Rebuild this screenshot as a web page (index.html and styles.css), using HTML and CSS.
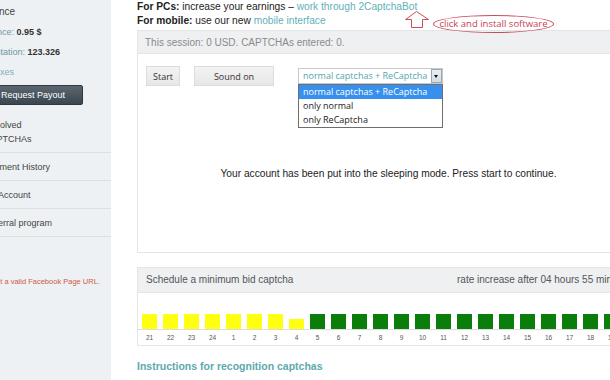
FILE: index.html
```html
<!DOCTYPE html>
<html>
<head>
<meta charset="utf-8">
<link rel="stylesheet" href="styles.css">
</head>
<body>
<div class="page">
  <aside class="sidebar">
    <div class="sb-title">Balance</div>
    <div class="sb-row"><span class="sb-label">Balance:</span> <b>0.95 $</b></div>
    <div class="sb-row"><span class="sb-label">Reputation:</span> <b>123.326</b></div>
    <div class="sb-row"><a class="sb-link" href="#">Annexes</a></div>
    <button class="payout">Request Payout</button>
    <nav class="sb-nav">
      <a class="nav-item" href="#">Unsolved<br>CAPTCHAs</a>
      <a class="nav-item" href="#">Payment History</a>
      <a class="nav-item" href="#">My Account</a>
      <a class="nav-item" href="#">Referral program</a>
    </nav>
    <p class="sb-error">Is not a valid Facebook Page URL.</p>
  </aside>

  <main class="main">
    <div class="head">
      <p><b>For PCs:</b> increase your earnings – <a href="#">work through 2CaptchaBot</a></p>
      <p><b>For mobile:</b> use our new <a href="#">mobile interface</a></p>
      <svg class="note-arrow" width="26" height="19" viewBox="0 0 26 19">
        <path d="M7.5 17.5 V9.5 H1.5 L12.5 1.5 L24.5 9.5 H18.5 V17.5 Z" fill="none" stroke="#cc4a5c" stroke-width="1"/>
      </svg>
      <span class="note-oval">click and install software</span>
    </div>

    <section class="panel session">
      <div class="panel-head">This session: 0 USD. CAPTCHAs entered: 0.</div>
      <div class="session-body">
        <div class="controls">
          <button class="btn btn-start">Start</button>
          <button class="btn btn-sound">Sound on</button>
          <div class="select">
            <div class="select-box"><span class="select-value">normal captchas + ReCaptcha</span><span class="select-arrow"></span></div>
            <ul class="select-list">
              <li class="active">normal captchas + ReCaptcha</li>
              <li>only normal</li>
              <li>only ReCaptcha</li>
            </ul>
          </div>
        </div>
        <p class="sleep-msg">Your account has been put into the sleeping mode. Press start to continue.</p>
      </div>
    </section>

    <section class="panel schedule">
      <div class="sched-head"><span>Schedule a minimum bid captcha</span><span>rate increase after 04 hours 55 minutes</span></div>
      <div class="chart">
        <div class="bars">
          <span class="bar bar-y"></span><span class="bar bar-y"></span><span class="bar bar-y"></span><span class="bar bar-y"></span>
          <span class="bar bar-y"></span><span class="bar bar-y"></span><span class="bar bar-y"></span><span class="bar bar-y bar-low"></span>
          <span class="bar bar-g"></span><span class="bar bar-g"></span><span class="bar bar-g"></span><span class="bar bar-g"></span>
          <span class="bar bar-g"></span><span class="bar bar-g"></span><span class="bar bar-g"></span><span class="bar bar-g"></span>
          <span class="bar bar-g"></span><span class="bar bar-g"></span><span class="bar bar-g"></span><span class="bar bar-g"></span>
          <span class="bar bar-g"></span><span class="bar bar-g"></span><span class="bar bar-g"></span><span class="bar bar-g"></span>
        </div>
        <div class="labels">
          <span>21</span><span>22</span><span>23</span><span>24</span><span>1</span><span>2</span><span>3</span><span>4</span>
          <span>5</span><span>6</span><span>7</span><span>8</span><span>9</span><span>10</span><span>11</span><span>12</span>
          <span>13</span><span>14</span><span>15</span><span>16</span><span>17</span><span>18</span><span>19</span><span>20</span>
        </div>
      </div>
    </section>

    <a class="instructions" href="#">Instructions for recognition captchas</a>
  </main>
</div>
</body>
</html>
```

FILE: styles.css
```css
* { box-sizing: border-box; }
html, body { margin: 0; padding: 0; }
body {
  width: 610px;
  height: 380px;
  overflow: hidden;
  background: #fff;
  font-family: "Liberation Sans", Arial, sans-serif;
  color: #333;
}
a { text-decoration: none; }

.page {
  display: flex;
  align-items: stretch;
  min-height: 380px;
  margin-left: -40px;
}

/* ---------- sidebar ---------- */
.sidebar {
  flex: none;
  width: 151px;
  background: #eef1f3;
  padding: 2px 0 0 19px;
  font-size: 9px;
  color: #444;
}
.sb-title { line-height: 20px; font-size: 10px; color: #444; }
.sb-row { line-height: 20px; }
.sb-label { color: #6f97a4; }
.sb-row b { color: #333; }
.sb-link { color: #78b4bf; }
.payout {
  display: block;
  margin: 3px 0 0;
  width: 104px;
  height: 20px;
  padding: 0 0 0 21px;
  text-align: left;
  background: linear-gradient(#5a6770, #3a4650);
  border: 1px solid #2e3840;
  border-radius: 2px;
  color: #fff;
  font: 9px "Liberation Sans", Arial, sans-serif;
}
.sb-nav { margin-top: 6px; display: flex; flex-direction: column; }
.nav-item {
  display: block;
  padding: 7px 0 6px 5px;
  line-height: 14px;
  border-bottom: 1px solid #dce0e3;
  color: #444;
}
.sb-error {
  margin: 39px 0 0;
  padding-left: 5px;
  line-height: 12px;
  font-size: 7.5px;
  color: #d05848;
}

/* ---------- main ---------- */
.main {
  flex: none;
  width: 503px;
  margin-left: 26px;
}
.head {
  position: relative;
  height: 30px;
  font-size: 10.2px;
  color: #222;
}
.head p { margin: 0; line-height: 14px; }
.head a { color: #5fb1b9; }
.note-arrow {
  position: absolute;
  left: 267px;
  top: 10px;
}
.note-oval {
  position: absolute;
  left: 296px;
  top: 15px;
  width: 121px;
  height: 18px;
  border: 1px solid #cc4a5c;
  border-radius: 50%;
  font: 9.5px/16px "Open Sans", sans-serif;
  color: #c8404f;
  text-align: center;
}

.panel {
  border: 1px solid #e3e6e8;
  width: 503px;
}
.panel-head {
  height: 23px;
  line-height: 23px;
  padding-left: 7px;
  background: #eef0f2;
  border-bottom: 1px solid #e3e6e8;
  font-size: 10px;
  color: #8b8b8b;
}
.session-body { height: 198px; }
.controls {
  display: flex;
  align-items: flex-start;
  padding: 12px 0 0 8px;
}
.btn {
  height: 20px;
  padding: 0;
  background: linear-gradient(#f3f3f3, #e7e7e7);
  border: 1px solid #dcdcdc;
  font: 9px "Open Sans", sans-serif;
  color: #333;
}
.btn-start { width: 34px; }
.btn-sound { width: 80px; margin-left: 14px; }
.select {
  position: relative;
  margin: 2px 0 0 24px;
  width: 145px;
}
.select-box {
  display: flex;
  height: 16px;
  border: 1px solid #c9c9c9;
  padding-left: 4px;
  font: 9px/14px "Open Sans", sans-serif;
  color: #55a6ae;
  background: #fff;
}
.select-arrow {
  position: relative;
  margin-left: auto;
  width: 11px;
  height: 14px;
  background: linear-gradient(#e9eef3, #d3dce5);
  border: 1px solid #9aa6b1;
}
.select-arrow::after {
  content: "";
  position: absolute;
  left: 2px;
  top: 5px;
  border-left: 2.5px solid transparent;
  border-right: 2.5px solid transparent;
  border-top: 3px solid #111;
}
.select-list {
  position: absolute;
  top: 16px;
  left: 0;
  width: 145px;
  margin: 0;
  padding: 0;
  list-style: none;
  background: #fff;
  border: 1px solid #6e6e6e;
  font: 9px/14px "Open Sans", sans-serif;
  color: #222;
}
.select-list li { height: 14px; padding-left: 4px; }
.select-list li.active { background: #3790ee; color: #fff; }
.sleep-msg {
  margin: 81px 0 0;
  line-height: 14px;
  text-align: center;
  font-size: 10.2px;
  color: #222;
}

.schedule { margin-top: 14px; }
.sched-head {
  display: flex;
  justify-content: space-between;
  height: 25px;
  line-height: 24px;
  padding: 0 8px;
  background: #eef0f2;
  border-bottom: 1px solid #e3e6e8;
  font-size: 10px;
  color: #555;
}
.chart { padding-top: 21px; }
.bars {
  display: flex;
  align-items: flex-end;
  gap: 6px;
  height: 16px;
  padding-left: 4px;
  border-bottom: 1px solid #dcdcdc;
}
.bar { flex: none; width: 15px; height: 15px; }
.bar-y { background: #ffff12; }
.bar-g { background: #0a7d0a; }
.bar-low { height: 10px; }
.labels {
  display: flex;
  gap: 6px;
  height: 15px;
  padding-left: 4px;
  line-height: 15px;
  font-size: 6.5px;
  color: #555;
}
.labels span { flex: none; width: 15px; text-align: center; }

.instructions {
  display: block;
  margin-top: 13px;
  line-height: 14px;
  font-size: 10.5px;
  font-weight: bold;
  color: #5da9ae;
}
```
